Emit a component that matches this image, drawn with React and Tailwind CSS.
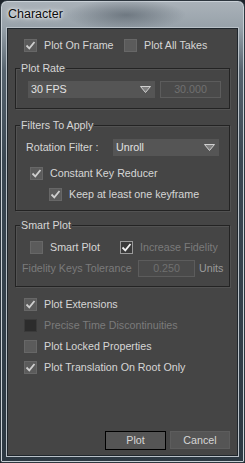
import React from 'react';

const font = { fontFamily: '"Liberation Sans", Arial, sans-serif' };

const Check = ({ checked, variant = 'normal' }) => {
    const box =
        variant === 'dark'
            ? 'bg-[#2c2c2c] border-[#3a3a3a]'
            : variant === 'focus'
            ? 'bg-[#3a3a3a] border-[#9a9a9a]'
            : 'bg-[#5b5b5b] border-[#676767]';
    const stroke = variant === 'focus' ? '#f2f2f2' : '#cfcfcf';
    return (
        <div className={`w-[13px] h-[13px] shrink-0 border flex items-center justify-center ${box}`}>
            {checked && (
                <svg width="11" height="11" viewBox="0 0 11 11">
                    <path d="M1.5 5.5 L4.3 8.3 L9.5 2" fill="none" stroke={stroke} strokeWidth="1.8" />
                </svg>
            )}
        </div>
    );
};

const CheckRow = ({ label, checked, variant, disabled, className = '' }) => (
    <div className={`flex items-center h-[13px] ${className}`}>
        <Check checked={checked} variant={variant} />
        <span className={`ml-[7px] text-[10.7px] leading-none whitespace-nowrap ${disabled ? 'text-[#7b7b7b]' : 'text-[#d6d6d6]'}`}>
            {label}
        </span>
    </div>
);

const Arrow = () => (
    <svg width="11" height="7" viewBox="0 0 11 7">
        <path d="M0.5 0.5 H10.5 L5.5 6.5 Z" fill="#7f7f7f" stroke="#d0d0d0" strokeWidth="1" />
    </svg>
);

const Group = ({ title, className = '', children }) => (
    <div className={`relative mx-[7px] border border-[#232323] shadow-[inset_1px_1px_0_#525252,1px_1px_0_#525252] ${className}`}>
        <span className="absolute -top-[8px] left-[4px] bg-[#454545] px-[1px] text-[10.7px] leading-[14px] text-[#d6d6d6]">
            {title}
        </span>
        {children}
    </div>
);

export default function App() {
    return (
        <div style={font} className="w-[245px] h-[463px] bg-[#1c232a]">
            <div className="w-[245px] h-[463px] rounded-t-[7px] rounded-b-[2px] border border-[#2d363e] flex flex-col bg-[linear-gradient(180deg,#aab2b9_0px,#98a2aa_26px,#56636e_70px,#3a4752_160px,#2c3842_463px)] shadow-[inset_0_0_0_1px_#c9d0d6]">
                {/* title bar */}
                <div className="h-[27px] shrink-0 flex items-center pl-[7px] bg-[radial-gradient(ellipse_60px_16px_at_125px_14px,rgba(70,80,90,0.55),transparent)]">
                    <span className="text-[12.5px] text-[#0c0c0c] [text-shadow:0_0_6px_#ffffff,0_0_3px_#ffffff]">Character</span>
                </div>

                {/* client area */}
                <div className="mx-[6px] mb-[6px] flex-1 border border-[#1f262c] shadow-[0_0_0_1px_#b8c0c7] bg-[#454545] flex flex-col">
                    <div className="flex items-center mt-[10px] pl-[16px]">
                        <CheckRow label="Plot On Frame" checked className="w-[100px]" />
                        <CheckRow label="Plot All Takes" />
                    </div>

                    <Group title="Plot Rate" className="mt-[16px] h-[41px] flex items-start pt-[12px] pl-[12px]">
                        <div className="w-[127px] h-[17px] bg-[#555555] flex items-center justify-between pl-[3px] pr-[4px]">
                            <span className="text-[10.7px] text-[#e2e2e2]">30 FPS</span>
                            <Arrow />
                        </div>
                        <div className="ml-[5px] w-[61px] h-[17px] border border-[#5c5c5c] bg-[#4a4a4a] flex items-center justify-center">
                            <span className="text-[10.7px] text-[#707070]">30.000</span>
                        </div>
                    </Group>

                    <Group title="Filters To Apply" className="mt-[16px] h-[86px] pt-[13px]">
                        <div className="flex items-center pl-[10px]">
                            <span className="w-[87px] text-[10.7px] text-[#d6d6d6]">Rotation Filter :</span>
                            <div className="w-[106px] h-[17px] bg-[#555555] flex items-center justify-between pl-[3px] pr-[4px]">
                                <span className="text-[10.7px] text-[#e2e2e2]">Unroll</span>
                                <Arrow />
                            </div>
                        </div>
                        <CheckRow label="Constant Key Reducer" checked className="mt-[11px] pl-[14px]" />
                        <CheckRow label="Keep at least one keyframe" checked className="mt-[8px] pl-[33px]" />
                    </Group>

                    <Group title="Smart Plot" className="mt-[14px] h-[62px] pt-[15px]">
                        <div className="flex items-center pl-[14px]">
                            <CheckRow label="Smart Plot" className="w-[90px]" />
                            <CheckRow label="Increase Fidelity" checked variant="focus" disabled />
                        </div>
                        <div className="flex items-center mt-[6px] pl-[6px]">
                            <span className="w-[116px] text-[10.7px] text-[#7b7b7b] whitespace-nowrap">Fidelity Keys Tolerance</span>
                            <div className="w-[57px] h-[17px] border border-[#5c5c5c] bg-[#4a4a4a] flex items-center justify-center">
                                <span className="text-[10.7px] text-[#707070]">0.250</span>
                            </div>
                            <span className="ml-[4px] text-[10.7px] text-[#9a9a9a]">Units</span>
                        </div>
                    </Group>

                    <div className="mt-[11px] pl-[16px] flex flex-col gap-[8px]">
                        <CheckRow label="Plot Extensions" checked />
                        <CheckRow label="Precise Time Discontinuities" variant="dark" disabled />
                        <CheckRow label="Plot Locked Properties" />
                        <CheckRow label="Plot Translation On Root Only" checked />
                    </div>

                    <div className="mt-auto mb-[5px] pr-[7px] flex justify-end gap-[4px]">
                        <button className="w-[61px] h-[19px] border border-black bg-[#555555] text-[10.7px] text-[#d6d6d6]">Plot</button>
                        <button className="w-[60px] h-[18px] border border-[#5d5d5d] bg-[#555555] text-[10.7px] text-[#d6d6d6]">Cancel</button>
                    </div>
                </div>
            </div>
        </div>
    );
}
